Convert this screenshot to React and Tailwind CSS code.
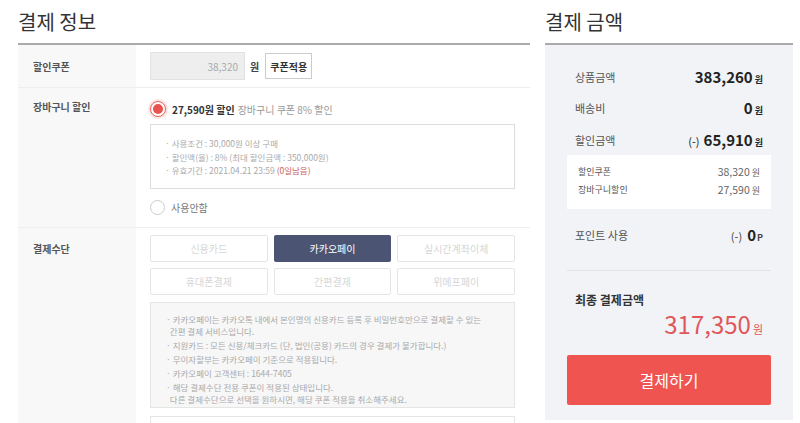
const FONT = { fontFamily: '"Noto Sans CJK KR", "Noto Sans", sans-serif' };

function Radio({ checked, children }) {
  return (
    <div className="flex items-center gap-[6px]">
      {checked ? (
        <span className="w-[16px] h-[16px] rounded-full border border-[#e9625f] bg-white flex items-center justify-center shadow-[0_0_0_2px_#fbe3e2]">
          <span className="w-[10px] h-[10px] rounded-full bg-[#e8524f]" />
        </span>
      ) : (
        <span className="w-[15px] h-[15px] rounded-full border border-[#ccc] bg-white" />
      )}
      {children}
    </div>
  );
}

const methods = ['신용카드', '카카오페이', '실시간계좌이체', '휴대폰결제', '간편결제', '위메프페이'];

export default function App() {
  return (
    <div className="w-[800px] h-[423px] overflow-hidden bg-white flex text-[#333]" style={FONT}>
      {/* 결제 정보 */}
      <div className="ml-[18px] w-[512px] flex flex-col">
        <h2 className="shrink-0 h-[45px] pt-[9px] text-[20px] leading-[26px] text-[#333] border-b-2 border-[#aaa]">결제 정보</h2>

        <div className="shrink-0 flex h-[43px] border-b border-[#eee]">
          <div className="w-[118px] bg-[#f8f8f8] pl-[15px] flex items-center text-[10px] font-bold text-[#555]">할인쿠폰</div>
          <div className="flex-1 pl-[14px] flex items-center">
            <div className="w-[95px] h-[28px] bg-[#eee] border border-[#e2e2e2] flex items-center justify-end pr-[6px] text-[10px] text-[#aaa]">38,320</div>
            <span className="ml-[5px] text-[10px] font-bold text-[#444]">원</span>
            <button className="ml-[6px] w-[47px] h-[26px] border border-[#ccc] bg-white text-[10px] font-bold text-[#333]">쿠폰적용</button>
          </div>
        </div>

        <div className="shrink-0 flex h-[140px] border-b border-[#eee]">
          <div className="w-[118px] bg-[#f8f8f8] pl-[15px] pt-[11px] text-[10px] font-bold text-[#555]">장바구니 할인</div>
          <div className="flex-1 pl-[14px] pt-[13px] pr-[15px]">
            <Radio checked>
              <span className="text-[10px]">
                <b className="text-[#333]">27,590원 할인</b>
                <span className="text-[#999] ml-[3px]">장바구니 쿠폰 8% 할인</span>
              </span>
            </Radio>
            <div className="mt-[7px] h-[65px] border border-[#ddd] pl-[14px] pt-[12px] text-[8.5px] leading-[13.5px] text-[#aaa]">
              <p>· 사용조건 : 30,000원 이상 구매</p>
              <p>· 할인액(율) : 8% (최대 할인금액 : 350,000원)</p>
              <p>· 유효기간 : 2021.04.21 23:59 <span className="text-[#c9605c]">(0일남음)</span></p>
            </div>
            <div className="mt-[11px]">
              <Radio>
                <span className="text-[10px] text-[#777]">사용안함</span>
              </Radio>
            </div>
          </div>
        </div>

        <div className="flex flex-1 min-h-0 overflow-hidden">
          <div className="w-[118px] bg-[#f8f8f8] pl-[15px] pt-[13px] text-[10px] font-bold text-[#555]">결제수단</div>
          <div className="flex-1 pl-[14px] pt-[7px] pr-[15px]">
            <div className="grid grid-cols-3 gap-x-[6px] gap-y-[6px]">
              {methods.map((m) => (
                <div
                  key={m}
                  className={
                    m === '카카오페이'
                      ? 'h-[27px] rounded-[2px] bg-[#4b5573] text-white text-[10px] flex items-center justify-center'
                      : 'h-[27px] rounded-[2px] border border-[#e5e5e5] bg-white text-[#d6d6d6] text-[10px] flex items-center justify-center'
                  }
                >
                  {m}
                </div>
              ))}
            </div>
            <div className="mt-[7px] h-[106px] bg-[#f7f7f7] border border-[#e5e5e5] pl-[15px] pt-[10px] text-[8.5px] leading-[12px] text-[#aaa]">
              <p>· 카카오페이는 카카오톡 내에서 본인명의 신용카드 등록 후 비밀번호만으로 결제할 수 있는<br />&nbsp;&nbsp;간편 결제 서비스입니다.</p>
              <p className="mt-[2px]">· 지원카드 : 모든 신용/체크카드 (단, 법인(공용) 카드의 경우 결제가 불가합니다.)</p>
              <p className="mt-[2px]">· 무이자할부는 카카오페이 기준으로 적용됩니다.</p>
              <p className="mt-[2px]">· 카카오페이 고객센터 : 1644-7405</p>
              <p className="mt-[2px]">· 해당 결제수단 전용 쿠폰이 적용된 상태입니다.<br />&nbsp;&nbsp;다른 결제수단으로 선택을 원하시면, 해당 쿠폰 적용을 취소해주세요.</p>
            </div>
            <div className="mt-[8px] h-[20px] border border-[#e5e5e5] border-b-0" />
          </div>
        </div>
      </div>

      {/* 결제 금액 */}
      <div className="ml-[15px] w-[248px] flex flex-col">
        <h2 className="shrink-0 h-[45px] pt-[9px] text-[20px] leading-[26px] text-[#333] border-b-2 border-[#aaa]">결제 금액</h2>
        <div className="h-[375px] bg-[#f2f3f6] px-[22px] pt-[22px]">
          <div className="px-[8px] flex justify-between items-center h-[20px]">
            <span className="text-[11px] text-[#555]">상품금액</span>
            <span className="font-bold text-[15px] text-[#222]">383,260<span className="text-[9px] ml-[2px]">원</span></span>
          </div>
          <div className="mt-[11px] px-[8px] flex justify-between items-center h-[20px]">
            <span className="text-[11px] text-[#555]">배송비</span>
            <span className="font-bold text-[15px] text-[#222]">0<span className="text-[9px] ml-[2px]">원</span></span>
          </div>
          <div className="mt-[12px] px-[8px] flex justify-between items-center h-[20px]">
            <span className="text-[11px] text-[#555]">할인금액</span>
            <span className="font-bold text-[15px] text-[#222]"><span className="font-normal text-[11px] mr-[4px]">(-)</span>65,910<span className="text-[9px] ml-[2px]">원</span></span>
          </div>
          <div className="mt-[5px] h-[54px] bg-white px-[11px] pt-[9px] text-[9px] text-[#555]">
            <div className="flex justify-between items-center h-[16px]">
              <span>할인쿠폰</span>
              <span className="text-[10.5px] text-[#666]">38,320<span className="text-[9px] ml-[2px]">원</span></span>
            </div>
            <div className="mt-[2px] flex justify-between items-center h-[16px]">
              <span>장바구니할인</span>
              <span className="text-[10.5px] text-[#666]">27,590<span className="text-[9px] ml-[2px]">원</span></span>
            </div>
          </div>
          <div className="mt-[16px] px-[8px] flex justify-between items-center h-[20px]">
            <span className="text-[11px] text-[#555]">포인트 사용</span>
            <span className="text-[11px] text-[#444]">(-)<b className="ml-[5px] text-[15px] text-[#222]">0</b><b className="text-[9px] ml-[1px]">P</b></span>
          </div>
          <div className="mt-[25px] border-t border-[#e2e3e7]" />
          <div className="mt-[20px] px-[8px] text-[12px] font-bold text-[#333]">최종 결제금액</div>
          <div className="px-[8px] text-right text-[24px] leading-[30px] text-[#e0575b]">317,350<span className="text-[11px] ml-[2px]">원</span></div>
          <button className="mt-[11px] w-full h-[50px] rounded-[2px] bg-[#ef5451] text-white text-[16px]">결제하기</button>
        </div>
      </div>
    </div>
  );
}
